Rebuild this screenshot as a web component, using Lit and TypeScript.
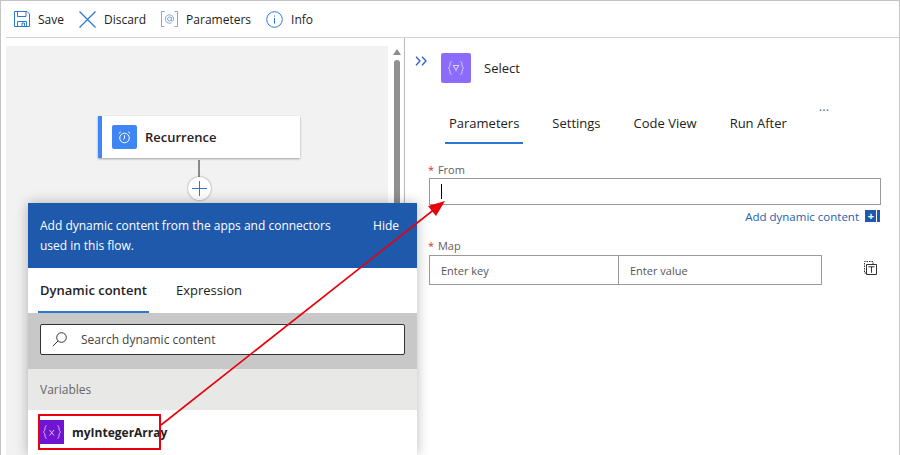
import { LitElement, html, css } from 'lit';
import { customElement } from 'lit/decorators.js';

@customElement('app-root')
export class AppRoot extends LitElement {
  static styles = css`
    :host {
      display: block;
      position: relative;
      width: 900px;
      height: 455px;
      box-sizing: border-box;
      overflow: hidden;
      background: #fff;
      border-top: 1px solid #c4c4c4;
      border-left: 1px solid #c4c4c4;
      border-right: 1px solid #c4c4c4;
      font-family: 'Open Sans', 'Noto Sans', sans-serif;
      font-size: 12.5px;
      color: #222;
    }
    svg { display: block; flex: none; }
    .toolbar {
      display: flex;
      align-items: center;
      height: 36px;
      margin-left: 5px;
      padding-left: 8px;
      border-bottom: 1px solid #d2d2d2;
      font-size: 12px;
    }
    .tool { display: flex; align-items: center; gap: 8px; margin-right: 15px; }
    .main { display: flex; height: 417px; }
    .left { display: flex; width: 399px; flex: none; padding: 8px 0 0 5px; box-sizing: border-box; }
    .canvas {
      width: 383px;
      height: 409px;
      background: #f2f2f2;
      display: flex;
      flex-direction: column;
      align-items: center;
      padding: 70px 0 0 4px;
      box-sizing: border-box;
    }
    .card {
      width: 202px;
      height: 42px;
      flex: none;
      display: flex;
      align-items: center;
      gap: 8px;
      box-sizing: border-box;
      background: #fff;
      border-left: 4px solid #3f86f5;
      padding-left: 10px;
      box-shadow: 0 1px 2px rgba(0, 0, 0, 0.35);
      font-size: 13px;
      font-weight: 600;
      margin-left: 0;
    }
    .card-icon {
      width: 25px;
      height: 24px;
      border-radius: 2px;
      background: #3f86f5;
      display: flex;
      align-items: center;
      justify-content: center;
    }
    .line { width: 2px; height: 17px; margin-top: 2px; background: #8a8a8a; }
    .add {
      width: 23px;
      height: 23px;
      flex: none;
      border-radius: 50%;
      background: #fff;
      box-shadow: 0 0 2px rgba(0, 0, 0, 0.5);
      display: flex;
      align-items: center;
      justify-content: center;
    }
    .scroll { width: 7px; margin-left: 5px; flex: none; display: flex; flex-direction: column; align-items: center; }
    .arrow-up {
      width: 0;
      height: 0;
      margin-top: 3px;
      border-left: 4px solid transparent;
      border-right: 4px solid transparent;
      border-bottom: 6px solid #8c8c8c;
    }
    .thumb { width: 6px; height: 150px; margin-top: 5px; border-radius: 3px 3px 0 0; background: #8f8f8f; }
    .right { flex: 1; border-left: 1px solid #b9b9b9; margin-left: 4px; padding-left: 10px; min-width: 0; }
    .head { display: flex; align-items: center; height: 30px; margin-top: 15px; }
    .chev { margin-right: 14px; margin-top: -14px; }
    .sel-icon {
      width: 30px;
      height: 30px;
      border-radius: 2px;
      background: #8c6cfb;
      display: flex;
      align-items: center;
      justify-content: center;
      margin-right: 13px;
    }
    .title { font-size: 13px; }
    .tabs { display: flex; align-items: stretch; height: 41px; margin: 20px 0 0 30px; font-size: 13px; }
    .tab { display: flex; align-items: center; padding: 0 4px; margin-right: 25px; border-bottom: 2px solid transparent; }
    .tab.on { border-bottom-color: #2a78d4; }
    .dots { color: #4f6f95; letter-spacing: 0; margin-left: 3px; transform: translateY(-2px); }
    .form { width: 452px; margin: 18px 0 0 14px; position: relative; }
    .lbl { font-size: 11px; line-height: 15px; color: #5f6062; margin-left: -1px; }
    .lbl b { color: #d13438; font-weight: 400; margin-right: 1px; }
    .from {
      height: 27px;
      box-sizing: border-box;
      border: 1px solid #9a9a9a;
      margin-top: 1px;
      display: flex;
      align-items: center;
      padding-left: 11px;
    }
    .caret { width: 1px; height: 15px; background: #000; }
    .dyn {
      display: flex;
      justify-content: flex-end;
      align-items: center;
      gap: 6px;
      height: 20px;
      margin-top: 1px;
      color: #2560b0;
      font-size: 11.5px;
    }
    .dyn-plus {
      display: flex;
      align-items: center;
      justify-content: center;
      width: 12px;
      height: 12px;
      margin-right: 1px;
      background: #1e59ab;
      color: #fff;
      font-size: 11px;
      font-weight: 700;
      line-height: 12px;
      border-right: 3px solid #1e59ab;
      box-shadow: inset -1px 0 0 #fff;
    }
    .map-lbl { margin-top: 12px; }
    .map { display: flex; align-items: flex-start; margin-top: 2px; width: 452px; }
    .ph {
      height: 30px;
      box-sizing: border-box;
      border: 1px solid #9a9a9a;
      display: flex;
      align-items: center;
      padding-left: 11px;
      font-size: 11px;
      color: #555;
    }
    .ph.k { width: 190px; }
    .ph.v { width: 204px; margin-left: -1px; }
    .del { margin: 5px 0 0 40px; }
    .popup {
      position: absolute;
      left: 27px;
      top: 202px;
      width: 389px;
      height: 252px;
      background: #fff;
      box-shadow: 0 0 12px rgba(0, 0, 0, 0.28);
      display: flex;
      flex-direction: column;
    }
    .banner {
      height: 65px;
      flex: none;
      display: flex;
      justify-content: space-between;
      box-sizing: border-box;
      padding: 13px 18px 0 12px;
      background: #1e59ab;
      color: #fff;
      font-size: 12px;
      line-height: 20px;
    }
    .ptabs { height: 45px; flex: none; display: flex; padding-left: 10px; font-size: 13px; }
    .ptab { display: flex; align-items: center; box-sizing: border-box; border-bottom: 2px solid transparent; }
    .ptab.on { width: 111px; justify-content: center; font-weight: 600; border-bottom-color: #2a78d4; }
    .ptab.off { margin-left: 27px; }
    .searchbar { height: 56px; flex: none; background: #c8c8c8; padding: 11px 12px; box-sizing: border-box; }
    .search {
      height: 31px;
      width: 365px;
      box-sizing: border-box;
      border: 1px solid #333;
      border-radius: 2px;
      background: #fff;
      display: flex;
      align-items: center;
      gap: 14px;
      padding-left: 11px;
      font-size: 12px;
      color: #444;
    }
    .group {
      height: 41px;
      flex: none;
      display: flex;
      align-items: center;
      padding-left: 12px;
      background: #e8e9e7;
      font-size: 12px;
      color: #666;
    }
    .item {
      display: flex;
      align-items: center;
      gap: 8px;
      margin: 10px 0 0 12px;
      font-size: 12px;
      font-weight: 700;
    }
    .var-icon {
      width: 24px;
      height: 24px;
      background: #7014d2;
      display: flex;
      align-items: center;
      justify-content: center;
    }
    .callout { position: absolute; left: -1px; top: -1px; pointer-events: none; }
  `;

  render() {
    return html`
      <div class="toolbar">
        <div class="tool">
          <svg width="16" height="16" viewBox="0 0 16 16" fill="none" stroke="#2a78d4"><path d="M.5.5h12.5l2.5 2.5v12.5H.5z"/><path d="M3.5.5v5h8.5v-5M3.5 15.5v-5h9v5M8 12v3.5h2.5V12z"/></svg>
          Save
        </div>
        <div class="tool">
          <svg width="17" height="17" viewBox="0 0 17 17" fill="none" stroke="#2a78d4" stroke-width="1.2"><path d="M.5.5l16 16M16.5.5l-16 16"/></svg>
          Discard
        </div>
        <div class="tool">
          <svg width="17" height="16" viewBox="0 0 17 16" fill="none" stroke="#7fa9dc"><path d="M3.5.5H.5v15h3M13.5.5h3v15h-3"/><circle cx="8.5" cy="8" r="2"/><path d="M10.5 6v3.2c0 1.5 2.200 1 2.200-1.200a4.200 4.200 0 1 0-2 3.600"/></svg>
          Parameters
        </div>
        <div class="tool">
          <svg width="17" height="17" viewBox="0 0 17 17" fill="none" stroke="#2a78d4"><circle cx="8.500" cy="8.500" r="7.800"/><path d="M8.500 7v5.500M8.500 4.500v1.200"/></svg>
          Info
        </div>
      </div>
      <div class="main">
        <div class="left">
          <div class="canvas">
            <div class="card">
              <div class="card-icon">
                <svg width="13" height="13" viewBox="0 0 13 13" fill="none" stroke="#fff"><circle cx="6.500" cy="7" r="4.800"/><path d="M6.500 4.200V7l-1.200 1.500M.8 2.500L2.800.8M12.200 2.500L10.200.8"/></svg>
              </div>
              Recurrence
            </div>
            <div class="line"></div>
            <div class="add">
              <svg width="15" height="15" viewBox="0 0 15 15" stroke="#2a78d4"><path d="M7.500 0v15M0 7.500h15"/></svg>
            </div>
          </div>
          <div class="scroll">
            <div class="arrow-up"></div>
            <div class="thumb"></div>
          </div>
        </div>
        <div class="right">
          <div class="head">
            <svg class="chev" width="12" height="10" viewBox="0 0 12 10" fill="none" stroke="#2a5fc4" stroke-width="1.300"><path d="M1 .8L5 5 1 9.200M7 .8L11 5 7 9.200"/></svg>
            <div class="sel-icon">
              <svg width="16" height="14" viewBox="0 0 16 14" fill="none" stroke="#dcd3fe"><path d="M3.500.5C1.500.5 2.500 6 .5 7c2 1 1 6.500 3 6.500M12.500.500c2 0 1 5.500 3 6.500-2 1-1 6.500-3 6.500M5 4.500h6L8 8.500zM8 8v2.500"/></svg>
            </div>
            <span class="title">Select</span>
          </div>
          <div class="tabs">
            <div class="tab on">Parameters</div>
            <div class="tab">Settings</div>
            <div class="tab">Code View</div>
            <div class="tab">Run After</div>
            <div class="dots">···</div>
          </div>
          <div class="form">
            <div class="lbl"><b>*</b> From</div>
            <div class="from"><div class="caret"></div></div>
            <div class="dyn">Add dynamic content <span class="dyn-plus">+</span></div>
            <div class="lbl map-lbl"><b>*</b> Map</div>
            <div class="map">
              <div class="ph k">Enter key</div>
              <div class="ph v">Enter value</div>
              <svg class="del" width="15" height="15" viewBox="0 0 15 15" fill="none" stroke="#333"><path d="M4 13H2.500V1.500H11V4" stroke-dasharray="1.500 1"/><path d="M4.500 4.500h10v10h-10zM6.500 6.800h6M9.500 6.800v6"/></svg>
            </div>
          </div>
        </div>
      </div>

      <div class="popup">
        <div class="banner">
          <div>Add dynamic content from the apps and connectors<br />used in this flow.</div>
          <div>Hide</div>
        </div>
        <div class="ptabs">
          <div class="ptab on">Dynamic content</div>
          <div class="ptab off">Expression</div>
        </div>
        <div class="searchbar">
          <div class="search">
            <svg width="15" height="15" viewBox="0 0 15 15" fill="none" stroke="#333"><circle cx="9.500" cy="5.500" r="4.800"/><path d="M6 9L.8 14.200"/></svg>
            Search dynamic content
          </div>
        </div>
        <div class="group">Variables</div>
        <div class="item">
          <div class="var-icon">
            <svg width="18" height="14" viewBox="0 0 18 14" fill="none" stroke="#d8bdf5"><path d="M3.500.5C1.500.5 2.500 6 .5 7c2 1 1 6.500 3 6.500M14.500.500c2 0 1 5.500 3 6.500-2 1-1 6.500-3 6.500M6.500 5l4.500 5.500M11 5l-4.500 5.500"/></svg>
          </div>
          myIntegerArray
        </div>
      </div>

      <svg class="callout" width="900" height="455" viewBox="0 0 900 455" fill="none">
        <rect x="39" y="415" width="121" height="34" stroke="#e8000d" stroke-width="2"/>
        <path d="M161 425L436 208" stroke="#e8000d" stroke-width="1.600"/>
        <path d="M445 201L428 206L436 216z" fill="#e8000d"/>
      </svg>
    `;
  }
}
